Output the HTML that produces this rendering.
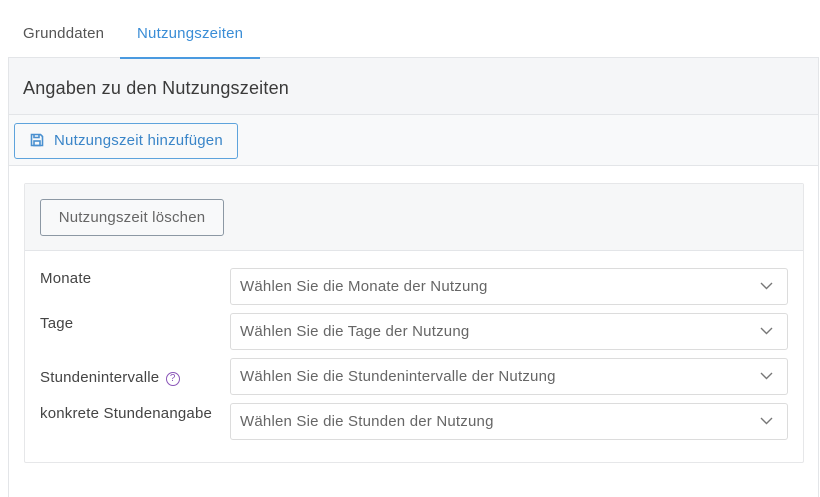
<!DOCTYPE html>
<html><head><meta charset="utf-8"><style>
*{box-sizing:border-box;margin:0;padding:0}
body{width:820px;height:496px;background:#fff;font-family:"Liberation Sans",sans-serif;color:#444;position:relative;overflow:hidden;font-size:15px;letter-spacing:0.2px}
.a{position:absolute}
.sel{position:absolute;left:230px;width:558px;height:37px;border:1px solid #dcdcdc;border-radius:3px;background:#fff;color:#666;font-size:15px;line-height:35px;padding-left:9px}
.sel svg{position:absolute;right:14px;top:13px}
.lbl{position:absolute;left:40px;font-size:15px;color:#444}
</style></head><body>
<div class="a" style="left:23px;top:25px;font-size:15px;color:#555">Grunddaten</div>
<div class="a" style="left:137px;top:25px;font-size:15px;color:#3a8dd6">Nutzungszeiten</div>
<div class="a" style="left:8px;top:57px;width:811px;height:440px;border:1px solid #e3e5e8;border-bottom:none"></div>
<div class="a" style="left:9px;top:58px;width:809px;height:57px;background:#f5f6f8;border-bottom:1px solid #e3e5e8"></div>
<div class="a" style="left:120px;top:57px;width:140px;height:2px;background:#4a9ae0"></div>
<div class="a" style="left:23px;top:78px;font-size:18px;color:#3a3a3a">Angaben zu den Nutzungszeiten</div>
<div class="a" style="left:9px;top:115px;width:809px;height:51px;background:#f8f9fa;border-bottom:1px solid #e3e5e8"></div>
<div class="a" style="left:14px;top:123px;width:224px;height:36px;border:1px solid #5ea3dc;border-radius:3px;background:#f8f9fa;color:#3a85c8;font-size:15px;line-height:34px;padding-left:39px">Nutzungszeit hinzufügen</div>
<svg class="a" style="left:30px;top:133px" width="14" height="14" viewBox="0 0 14 14" fill="none" stroke="#4a90d0" stroke-width="1.6"><path d="M1.5 1.5h9l2 2v9h-11z"/><path d="M4 1.5v3h5v-3"/><rect x="4" y="8" width="6" height="4.5"/></svg>
<div class="a" style="left:24px;top:183px;width:780px;height:280px;border:1px solid #e6e7e9;border-radius:2px"></div>
<div class="a" style="left:25px;top:184px;width:778px;height:67px;background:#f6f7f8;border-bottom:1px solid #e3e5e8"></div>
<div class="a" style="left:40px;top:199px;width:184px;height:37px;border:1px solid #8c98a4;border-radius:3px;background:#f8f9fa;color:#666;font-size:15px;line-height:35px;text-align:center">Nutzungszeit löschen</div>
<div class="lbl" style="top:270px">Monate</div>
<div class="lbl" style="top:315px">Tage</div>
<div class="lbl" style="top:369px">Stundenintervalle <span style="display:inline-block;width:14px;height:14px;border:1.3px solid #8a55b8;border-radius:50%;color:#8a55b8;font-size:10px;line-height:12px;text-align:center;vertical-align:1px;margin-left:2px;letter-spacing:0">?</span></div>
<div class="lbl" style="top:405px">konkrete Stundenangabe</div>
<div class="sel" style="top:268px">Wählen Sie die Monate der Nutzung<svg width="13" height="8" viewBox="0 0 13 8"><path d="M1 1l5.5 5.5L12 1" fill="none" stroke="#777" stroke-width="1.4"/></svg></div>
<div class="sel" style="top:313px">Wählen Sie die Tage der Nutzung<svg width="13" height="8" viewBox="0 0 13 8"><path d="M1 1l5.5 5.5L12 1" fill="none" stroke="#777" stroke-width="1.4"/></svg></div>
<div class="sel" style="top:358px">Wählen Sie die Stundenintervalle der Nutzung<svg width="13" height="8" viewBox="0 0 13 8"><path d="M1 1l5.5 5.5L12 1" fill="none" stroke="#777" stroke-width="1.4"/></svg></div>
<div class="sel" style="top:403px">Wählen Sie die Stunden der Nutzung<svg width="13" height="8" viewBox="0 0 13 8"><path d="M1 1l5.5 5.5L12 1" fill="none" stroke="#777" stroke-width="1.4"/></svg></div>
</body></html>
